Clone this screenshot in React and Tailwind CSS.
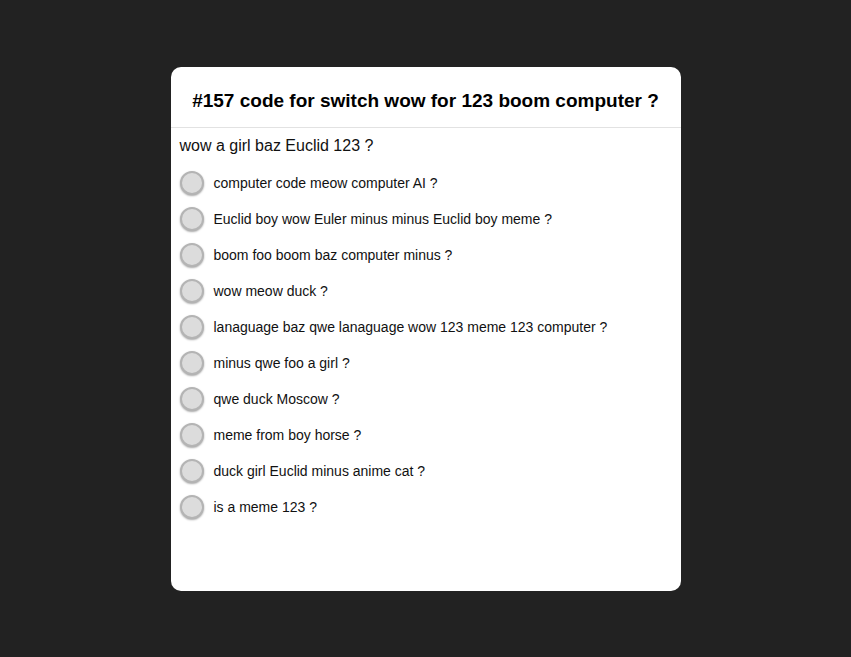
import React, { useState } from 'react';

const QUESTION = {
  title: '#157 code for switch wow for 123 boom computer ?',
  text: 'wow a girl baz Euclid 123 ?',
  options: [
    'computer code meow computer AI ?',
    'Euclid boy wow Euler minus minus Euclid boy meme ?',
    'boom foo boom baz computer minus ?',
    'wow meow duck ?',
    'lanaguage baz qwe lanaguage wow 123 meme 123 computer ?',
    'minus qwe foo a girl ?',
    'qwe duck Moscow ?',
    'meme from boy horse ?',
    'duck girl Euclid minus anime cat ?',
    'is a meme 123 ?',
  ],
};

const Radio = ({ checked }) => (
  <span className="w-6 h-6 rounded-full border-2 border-[#b4b4b4] bg-[#dcdcdc] shadow-[0_1px_2px_rgba(0,0,0,0.35)] flex items-center justify-center shrink-0">
    {checked && <span className="w-2.5 h-2.5 rounded-full bg-[#555]" />}
  </span>
);

export default function App() {
  const [selected, setSelected] = useState(null);

  return (
    <div
      className="min-h-screen bg-[#222222] flex justify-center pt-[67px]"
      style={{ fontFamily: '"Liberation Sans", Arial, sans-serif' }}
    >
      <div className="w-[510px] h-[524px] bg-white rounded-[10px] overflow-hidden">
        <div className="h-[61px] flex items-center justify-center border-b border-[#e2e2e2]">
          <h1 className="text-[19px] leading-[22px] font-bold text-black pt-[7px]">{QUESTION.title}</h1>
        </div>
        <div className="px-[9px]">
          <p className="text-[16px] leading-[18px] text-[#111] mt-[9px] mb-[10px]">{QUESTION.text}</p>
          {QUESTION.options.map((opt, i) => (
            <label
              key={i}
              onClick={() => setSelected(i)}
              className="h-9 flex items-center gap-[10px] cursor-pointer"
            >
              <Radio checked={selected === i} />
              <span className="text-[14px] text-[#111]">{opt}</span>
            </label>
          ))}
        </div>
      </div>
    </div>
  );
}
